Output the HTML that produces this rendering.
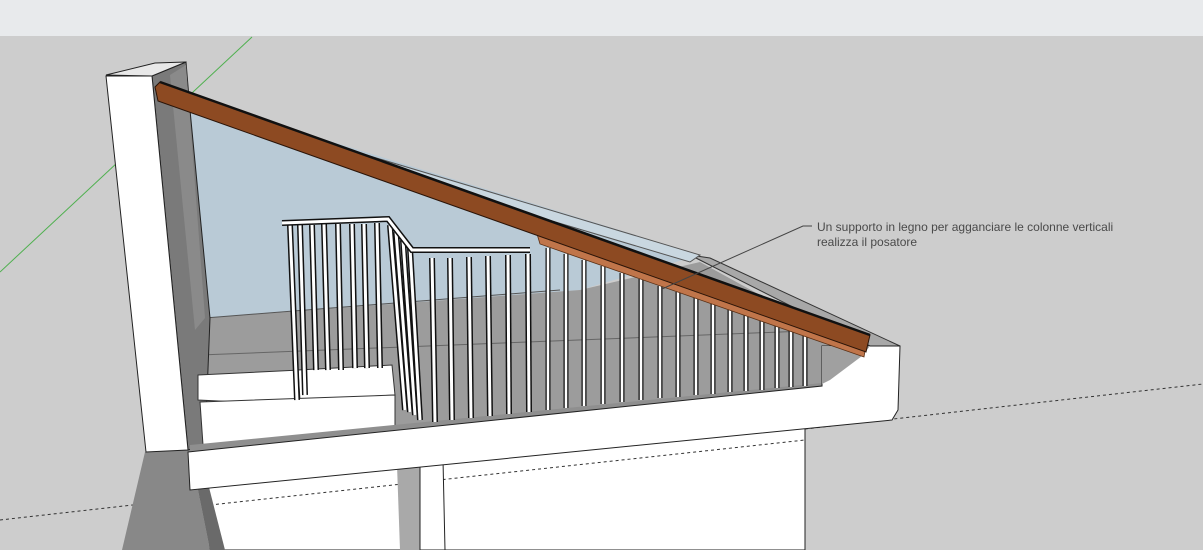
<!DOCTYPE html>
<html><head><style>
html,body{margin:0;padding:0;width:1203px;height:550px;overflow:hidden;background:#cdcdcd}
svg{display:block}
text{font-family:"Liberation Sans",sans-serif;font-size:12px;fill:#4a4a4a}
</style></head><body>
<svg width="1203" height="550" viewBox="0 0 1203 550" xmlns="http://www.w3.org/2000/svg">
<rect x="0" y="0" width="1203" height="36" fill="#e8eaec"/>
<rect x="0" y="36" width="1203" height="514" fill="#cdcdcd"/>
<line x1="252" y1="37" x2="0" y2="272" stroke="#4fb04f" stroke-width="1"/>
<line x1="0" y1="520" x2="1203" y2="384" stroke="#333" stroke-width="1" stroke-dasharray="3,3"/>
<!-- glass -->
<polygon points="180,95 700,255 580,290 205,318" fill="#b9cad6"/>
<!-- back floor/walls -->
<polygon points="205,318 580,290 700,262 860,350 830,385 190,445" fill="#9c9c9c"/>
<line x1="205" y1="318" x2="560" y2="290" stroke="#555" stroke-width="1"/>
<line x1="200" y1="355" x2="830" y2="330" stroke="#666" stroke-width="1"/>
<!-- lower wall below -->
<polygon points="205,460 805,420 805,550 210,550" fill="#fff" stroke="#222"/>
<line x1="210" y1="505" x2="805" y2="440" stroke="#333" stroke-dasharray="3,3"/>
<polygon points="397,465 420,462 420,550 400,550" fill="#a9a9a9"/>
<polygon points="420,462 443,460 445,550 420,550" fill="#fff" stroke="#222"/>
<!-- left pillar -->
<polygon points="145,452 190,450 210,550 122,550" fill="#888"/>
<polygon points="190,450 200,452 225,550 210,550" fill="#6a6a6a"/>
<polygon points="152,76 186,62 190,110 210,318 205,445 188,450" fill="#7a7a7a" stroke="#222"/>
<polygon points="170,75 186,65 205,318 195,330" fill="#8a8a8a"/>
<polygon points="106,75 155,63 186,62 152,76" fill="#e8e8e8" stroke="#222"/>
<polygon points="106,76 152,76 188,450 146,452" fill="#fff" stroke="#222"/>
<!-- steps -->
<polygon points="198,375 300,370 300,405 198,400" fill="#fff" stroke="#333"/>
<polygon points="298,370 392,365 395,395 300,400" fill="#fff" stroke="#333"/>
<polygon points="200,402 395,395 395,440 203,445" fill="#fff" stroke="#333"/>
<!-- gutter -->
<polygon points="690,255 710,258 900,346 870,346" fill="#a8a8a8" stroke="#333"/>
<polygon points="350,150 700,255 690,262 340,158" fill="#c9d7e0" stroke="#555"/>
<!-- parapet band with right end block -->
<polygon points="190,445 822,383 822,392 190,455" fill="#8f8f8f"/>
<polygon points="188,452 822,386 822,346 900,346 898,410 892,420 190,490" fill="#fff" stroke="#222"/>
<polygon points="822,346 870,346 862,356 830,380 822,384" fill="#a0a0a0"/>
<!-- railings -->
<g stroke-linecap="butt">
<g stroke="#111" stroke-width="6">
<line x1="290" y1="225" x2="297" y2="400"/><line x1="300" y1="225" x2="305" y2="395"/><line x1="312" y1="225" x2="316" y2="370"/><line x1="324" y1="224" x2="328" y2="370"/><line x1="338" y1="224" x2="341" y2="370"/><line x1="352" y1="224" x2="355" y2="368"/><line x1="364" y1="224" x2="367" y2="368"/><line x1="377" y1="223" x2="380" y2="368"/>
<line x1="390" y1="225" x2="405" y2="410"/><line x1="396" y1="232" x2="410" y2="412"/><line x1="403" y1="240" x2="415" y2="415"/><line x1="410" y1="248" x2="420" y2="420"/>
<line x1="432" y1="258" x2="435" y2="422"/><line x1="450" y1="258" x2="452" y2="420"/><line x1="469" y1="257" x2="471" y2="418"/><line x1="488" y1="256" x2="490" y2="416"/><line x1="508" y1="255" x2="509" y2="414"/><line x1="528" y1="254" x2="529" y2="412"/>
</g>
<g stroke="#fff" stroke-width="3">
<line x1="290" y1="225" x2="297" y2="400"/><line x1="300" y1="225" x2="305" y2="395"/><line x1="312" y1="225" x2="316" y2="370"/><line x1="324" y1="224" x2="328" y2="370"/><line x1="338" y1="224" x2="341" y2="370"/><line x1="352" y1="224" x2="355" y2="368"/><line x1="364" y1="224" x2="367" y2="368"/><line x1="377" y1="223" x2="380" y2="368"/>
<line x1="390" y1="225" x2="405" y2="410"/><line x1="396" y1="232" x2="410" y2="412"/><line x1="403" y1="240" x2="415" y2="415"/><line x1="410" y1="248" x2="420" y2="420"/>
<line x1="432" y1="258" x2="435" y2="422"/><line x1="450" y1="258" x2="452" y2="420"/><line x1="469" y1="257" x2="471" y2="418"/><line x1="488" y1="256" x2="490" y2="416"/><line x1="508" y1="255" x2="509" y2="414"/><line x1="528" y1="254" x2="529" y2="412"/>
</g>
<polyline points="282,223 388,219 412,250 530,250" fill="none" stroke="#111" stroke-width="6"/>
<polyline points="282,223 388,219 412,250 530,250" fill="none" stroke="#fff" stroke-width="3"/>
<g stroke="#111" stroke-width="5">
<line x1="548" y1="248" x2="548" y2="410"/><line x1="566" y1="254" x2="566" y2="408"/><line x1="584" y1="260" x2="584" y2="406"/><line x1="603" y1="266" x2="603" y2="404"/><line x1="622" y1="273" x2="622" y2="402"/><line x1="641" y1="279" x2="641" y2="400"/><line x1="660" y1="286" x2="660" y2="398"/><line x1="678" y1="292" x2="678" y2="397"/><line x1="696" y1="298" x2="696" y2="395"/><line x1="713" y1="304" x2="713" y2="394"/><line x1="730" y1="310" x2="730" y2="392"/><line x1="746" y1="315" x2="746" y2="391"/><line x1="762" y1="321" x2="762" y2="390"/><line x1="777" y1="326" x2="777" y2="388"/><line x1="791" y1="331" x2="791" y2="387"/><line x1="805" y1="336" x2="805" y2="386"/>
</g>
<g stroke="#fff" stroke-width="2.5">
<line x1="548" y1="248" x2="548" y2="410"/><line x1="566" y1="254" x2="566" y2="408"/><line x1="584" y1="260" x2="584" y2="406"/><line x1="603" y1="266" x2="603" y2="404"/><line x1="622" y1="273" x2="622" y2="402"/><line x1="641" y1="279" x2="641" y2="400"/><line x1="660" y1="286" x2="660" y2="398"/><line x1="678" y1="292" x2="678" y2="397"/><line x1="696" y1="298" x2="696" y2="395"/><line x1="713" y1="304" x2="713" y2="394"/><line x1="730" y1="310" x2="730" y2="392"/><line x1="746" y1="315" x2="746" y2="391"/><line x1="762" y1="321" x2="762" y2="390"/><line x1="777" y1="326" x2="777" y2="388"/><line x1="791" y1="331" x2="791" y2="387"/><line x1="805" y1="336" x2="805" y2="386"/>
</g>
</g>
<!-- support beam -->
<polygon points="537,234 545,232 866,345 864,357 540,244" fill="#c0754a" stroke="#5a3015" stroke-width="0.8"/>
<!-- main beam -->
<polygon points="155,87 160,82 870,335 866,352 158,101" fill="#8d4a22" stroke="#2a1408" stroke-width="1"/>
<line x1="160" y1="82" x2="870" y2="335" stroke="#111" stroke-width="2.5"/>
<!-- annotation -->
<polyline points="812,226 803,226 662,289" fill="none" stroke="#444" stroke-width="1"/>
<text x="817" y="231">Un supporto in legno per agganciare le colonne verticali</text>
<text x="817" y="246">realizza il posatore</text>
</svg>
</body></html>
